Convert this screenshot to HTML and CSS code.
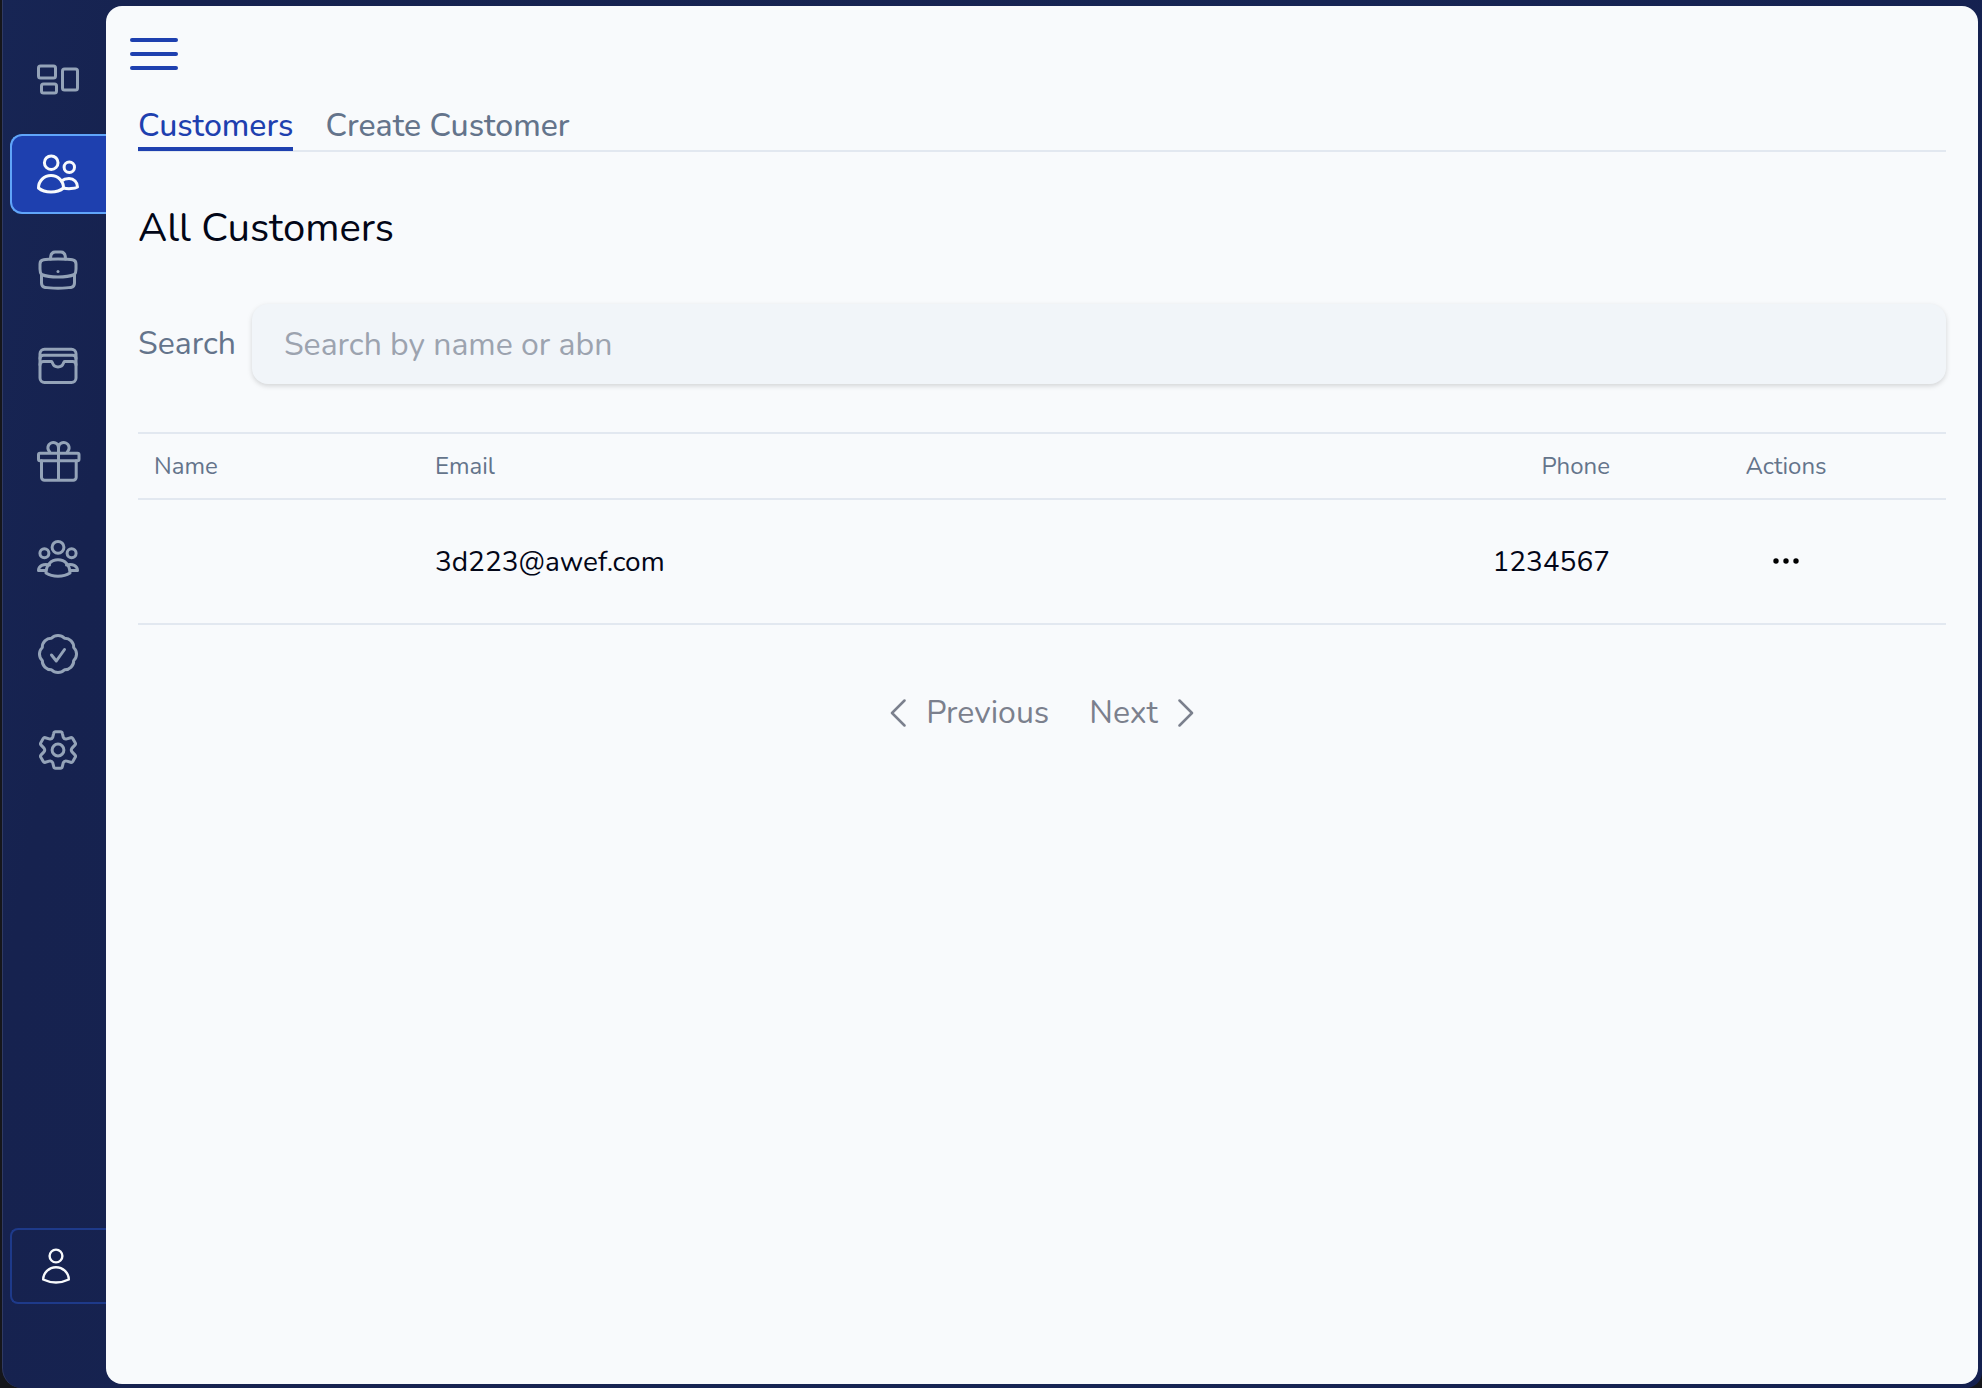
FILE: index.html
```html
<!DOCTYPE html>
<html lang="en">
<head>
<meta charset="utf-8">
<meta name="viewport" content="width=device-width, initial-scale=1">
<title>Customers</title>
<link rel="stylesheet" href="styles.css">
</head>
<body>
<div class="app">
  <nav class="sidebar" aria-label="Main">
    <a class="nav-item" href="#dashboard" aria-label="Dashboard">
      <svg class="icon" viewBox="0 0 48 48"><rect x="4.5" y="12" width="17" height="12" rx="2"/><rect x="7.5" y="30" width="15" height="9" rx="2"/><rect x="28.5" y="15" width="15" height="21" rx="2"/></svg>
    </a>
    <a class="nav-item nav-item-active" href="#customers" aria-label="Customers" aria-current="page">
      <svg class="icon" viewBox="0 0 48 48"><circle cx="17.2" cy="12.7" r="6.8"/><circle cx="35.3" cy="17.3" r="5.2"/><path d="M4.5 38C4.5 31 10 25.5 17 25.5S29.5 31 29.5 38C26 41 21.500 42 17 42S8 41 4.500 38Z"/><path d="M27.500 31C29.500 29.300 32 28.500 35 28.500c5 0 8.500 3.700 8.500 8.500-3 1.700-9.500 2.200-14 1"/></svg>
    </a>
    <a class="nav-item" href="#jobs" aria-label="Jobs">
      <svg class="icon" viewBox="0 0 48 48"><path d="M16.500 13C16.500 9 17.500 6 21 6h6c3.500 0 4.500 3 4.500 7"/><path d="M7.500 28.500C6.300 27 6 25 6 23V18C6 15.500 7 14.100 9.500 13.700 14 12.600 34 12.600 38.500 13.700 41 14.100 42 15.500 42 18v5c0 2-.3 4-1.500 5.500C36 30.300 30 31 24 31S12 30.300 7.500 28.500Z"/><path d="M7.500 28.500V37c0 2.500 1 4 3.500 4.400 5 1 21 1 26 0 2.500-.4 3.500-1.900 3.500-4.400V28.500"/><path d="M24 25.500v.1"/></svg>
    </a>
    <a class="nav-item" href="#archive" aria-label="Archive">
      <svg class="icon" viewBox="0 0 48 48"><rect x="6" y="7.200" width="36" height="33.300" rx="4.500"/><path d="M6 16.500C6 14.300 7.500 13.300 9.500 13.300h29c2 0 3.500 1 3.500 3.200"/><path d="M6 22.800C6 20.600 7.500 19.500 9.500 19.500H17.500C18.800 19.500 18 25 24 25s5.200-5.500 6.500-5.500h8c2 0 3.500 1.100 3.500 3.300"/></svg>
    </a>
    <a class="nav-item" href="#offers" aria-label="Offers">
      <svg class="icon" viewBox="0 0 48 48"><rect x="4.500" y="15.200" width="40.500" height="7.500" rx="1.500"/><path d="M7.500 22.700V39.200a3 3 0 0 0 3 3h28.700a3 3 0 0 0 3-3V22.700M24.500 10v32"/><path d="M24.500 15.200V9.800a5.300 5.300 0 1 0-8.800 4M24.500 15.200V9.800a5.300 5.300 0 1 1 8.800 4"/></svg>
    </a>
    <a class="nav-item" href="#teams" aria-label="Teams">
      <svg class="icon" viewBox="0 0 48 48"><circle cx="24" cy="13.300" r="5.900"/><circle cx="10.400" cy="19.300" r="4.500"/><circle cx="37.600" cy="19.300" r="4.500"/><path d="M12 39C12 31 17 25.800 24 25.800S36 31 36 39C32.500 41.300 28 42.200 24 42.200S15.500 41.300 12 39Z"/><path d="M15.500 31C9.500 29.300 4.500 32 4.500 36.500H12M32.500 31c6-1.700 11 1 11 5.500H36"/></svg>
    </a>
    <a class="nav-item" href="#approvals" aria-label="Approvals">
      <svg class="icon" viewBox="0 0 48 48"><path d="M17.500 8.300a8.900 8.900 0 0 1 13 0a8.900 8.900 0 0 1 9.200 9.200a8.900 8.900 0 0 1 0 13a8.900 8.900 0 0 1-9.200 9.200a8.900 8.900 0 0 1-13 0a8.900 8.900 0 0 1-9.200-9.200a8.900 8.900 0 0 1 0-13a8.900 8.900 0 0 1 9.200-9.200Z"/><path d="M17.500 25l4.800 6 8.200-11.500"/></svg>
    </a>
    <a class="nav-item" href="#settings" aria-label="Settings">
      <svg class="icon" viewBox="0 0 48 48"><circle cx="24" cy="24" r="5.900"/><path d="M21.500 5.800h5Q28 5.800 28.300 7.300L29.300 11.300Q30.300 13.500 32.800 12.900L36.700 11.700Q38 11.300 38.800 12.600L41.200 16.700Q42 18 40.900 19.100L38 22.100Q36.600 24 38 25.900L40.900 28.900Q42 30 41.200 31.300L38.800 35.400Q38 36.700 36.700 36.300L32.800 35.100Q30.300 34.500 29.300 36.700L28.300 40.700Q28 42.200 26.500 42.200h-5Q20 42.200 19.700 40.700L18.700 36.700Q17.700 34.500 15.200 35.100L11.300 36.300Q10 36.700 9.200 35.400L6.800 31.300Q6 30 7.100 28.900L10 25.900Q11.400 24 10 22.100L7.100 19.100Q6 18 6.800 16.700L9.200 12.600Q10 11.300 11.300 11.700L15.200 12.900Q17.700 13.500 18.700 11.300L19.700 7.300Q20 5.800 21.500 5.800Z"/></svg>
    </a>
    <a class="nav-item nav-profile" href="#profile" aria-label="Profile">
      <svg class="icon-profile" viewBox="0 0 40 40"><circle cx="20" cy="10" r="6.400"/><path d="M7.200 33.500C7.200 27 13 21.200 20 21.200S32.800 27 32.800 33.500C28 35.800 24 36.500 20 36.500S12 35.800 7.200 33.500Z"/></svg>
    </a>
  </nav>

  <main class="panel">
    <button class="menu-button" type="button" aria-label="Toggle menu">
      <span class="menu-bar"></span><span class="menu-bar"></span><span class="menu-bar"></span>
    </button>

    <div class="content">
      <nav class="tabs" aria-label="Customer pages">
        <a class="tab tab-active" href="#customers" aria-current="page">Customers</a>
        <a class="tab" href="#create">Create Customer</a>
      </nav>

      <h1 class="title">All Customers</h1>

      <form class="search">
        <label class="search-label" for="search">Search</label>
        <input class="search-input" id="search" type="text" placeholder="Search by name or abn">
      </form>

      <table class="customers">
        <colgroup><col class="col-name"><col><col class="col-phone"><col class="col-actions"></colgroup>
        <thead>
          <tr><th>Name</th><th>Email</th><th class="right">Phone</th><th class="center">Actions</th></tr>
        </thead>
        <tbody>
          <tr>
            <td></td>
            <td>3d223@awef.com</td>
            <td class="right">1234567</td>
            <td>
              <button class="row-menu" type="button" aria-label="Customer actions">
                <svg class="dots" viewBox="0 0 32 32"><circle cx="6" cy="15" r="2.7"/><circle cx="16" cy="15" r="2.7"/><circle cx="26" cy="15" r="2.7"/></svg>
              </button>
            </td>
          </tr>
        </tbody>
      </table>

      <div class="pagination">
        <button class="page-button" type="button">
          <svg class="chevron" viewBox="0 0 16 28"><path d="M14.500 1.500L2 14l12.500 12.500"/></svg>
          Previous
        </button>
        <button class="page-button" type="button">
          Next
          <svg class="chevron" viewBox="0 0 16 28"><path d="M1.500 1.500L14 14 1.500 26.500"/></svg>
        </button>
      </div>
    </div>
  </main>
</div>
</body>
</html>
```

FILE: styles.css
```css
* {
  box-sizing: border-box;
}

body {
  margin: 0;
  background: #15161b;
  color: #020617;
  font-family: Nunito, Lato, "Noto Sans", sans-serif;
  font-size: 32px;
  line-height: 48px;
}

button,
input {
  font: inherit;
}

button {
  padding: 0;
  border: 0;
  background: none;
  cursor: pointer;
}

a {
  color: inherit;
  text-decoration: none;
}

svg {
  display: block;
  fill: none;
  stroke: currentColor;
  stroke-linecap: round;
  stroke-linejoin: round;
}

.app {
  display: flex;
  min-height: 100vh;
  margin-left: 2px;
  border-left: 1px solid #303a63;
  border-radius: 0 0 16px 20px;
  background: linear-gradient(100deg, #172554, #16224f 8%, #172554 60%, #14204f);
}

/* Sidebar */
.sidebar {
  display: flex;
  flex: none;
  flex-direction: column;
  gap: 16px;
  width: 103px;
  padding: 38px 0 84px 7px;
  color: #94a3b8;
}

.nav-item {
  display: flex;
  align-items: center;
  height: 80px;
  padding-left: 22px;
  border: 2px solid transparent;
  border-right: 0;
  border-radius: 12px 0 0 12px;
}

.nav-item-active {
  border-color: #60a5fa;
  background: #1e40af;
  color: #f8fafc;
}

.nav-profile {
  height: 76px;
  margin-top: auto;
  padding-left: 24px;
  border-color: #1e3a8a;
  border-radius: 8px 0 0 8px;
  color: #f8fafc;
}

.icon {
  width: 48px;
  height: 48px;
  stroke-width: 3;
}

.icon-profile {
  width: 40px;
  height: 40px;
  stroke-width: 2.4;
}

/* Main panel */
.panel {
  flex: 1;
  min-width: 0;
  margin: 6px 4px 4px 0;
  padding: 32px;
  border-radius: 16px;
  background: #f8fafc;
}

.menu-button {
  display: flex;
  flex-direction: column;
  gap: 10px;
  width: 48px;
  margin-left: -8px;
}

.menu-bar {
  height: 4px;
  border-radius: 2px;
  background: #1e40af;
}

.content {
  padding-top: 32px;
}

.tabs {
  display: flex;
  gap: 32px;
  border-bottom: 2px solid #e2e8f0;
  color: #64748b;
  font-weight: 500;
}

.tab {
  height: 48px;
}

.tab-active {
  height: 49px;
  margin-bottom: -1px;
  border-bottom: 4px solid #1e40af;
  color: #1e40af;
}

.title {
  margin: 48px 0;
  font-size: 40px;
  font-weight: 400;
  line-height: 56px;
}

.search {
  display: flex;
  align-items: center;
  gap: 16px;
}

.search-label {
  color: #64748b;
}

.search-input {
  flex: 1;
  min-width: 0;
  height: 80px;
  padding: 0 32px;
  border: 0;
  border-radius: 16px;
  outline: 0;
  background: #f1f5f9;
  box-shadow: 0 2px 6px rgb(0 0 0 / 8%), 0 2px 4px rgb(0 0 0 / 8%);
  color: #020617;
}

.search-input::placeholder {
  color: #9ca3af;
  opacity: 1;
}

/* Customer table */
.customers {
  width: 100%;
  margin-top: 48px;
  border-top: 2px solid #e2e8f0;
  border-spacing: 0;
  table-layout: fixed;
}

.col-name {
  width: 281px;
}

.col-phone {
  width: 320px;
}

.col-actions {
  width: 320px;
}

.customers th,
.customers td {
  padding: 0 16px;
  border-bottom: 2px solid #e2e8f0;
  font-weight: 400;
  text-align: left;
}

.customers th {
  height: 66px;
  color: #64748b;
  font-size: 24px;
  line-height: 32px;
}

.customers td {
  height: 125px;
  font-size: 28px;
  line-height: 40px;
}

.customers .right {
  text-align: right;
}

.customers .center {
  text-align: center;
}

.row-menu {
  display: block;
  margin: 0 auto;
}

.dots {
  width: 32px;
  height: 32px;
  fill: currentColor;
  stroke: none;
}

/* Pagination */
.pagination {
  display: flex;
  justify-content: center;
  gap: 40px;
  margin-top: 64px;
  color: #7b808d;
}

.page-button {
  display: flex;
  align-items: center;
  gap: 20px;
  color: inherit;
}

.chevron {
  width: 16px;
  height: 28px;
  stroke-width: 2.5;
}
```
